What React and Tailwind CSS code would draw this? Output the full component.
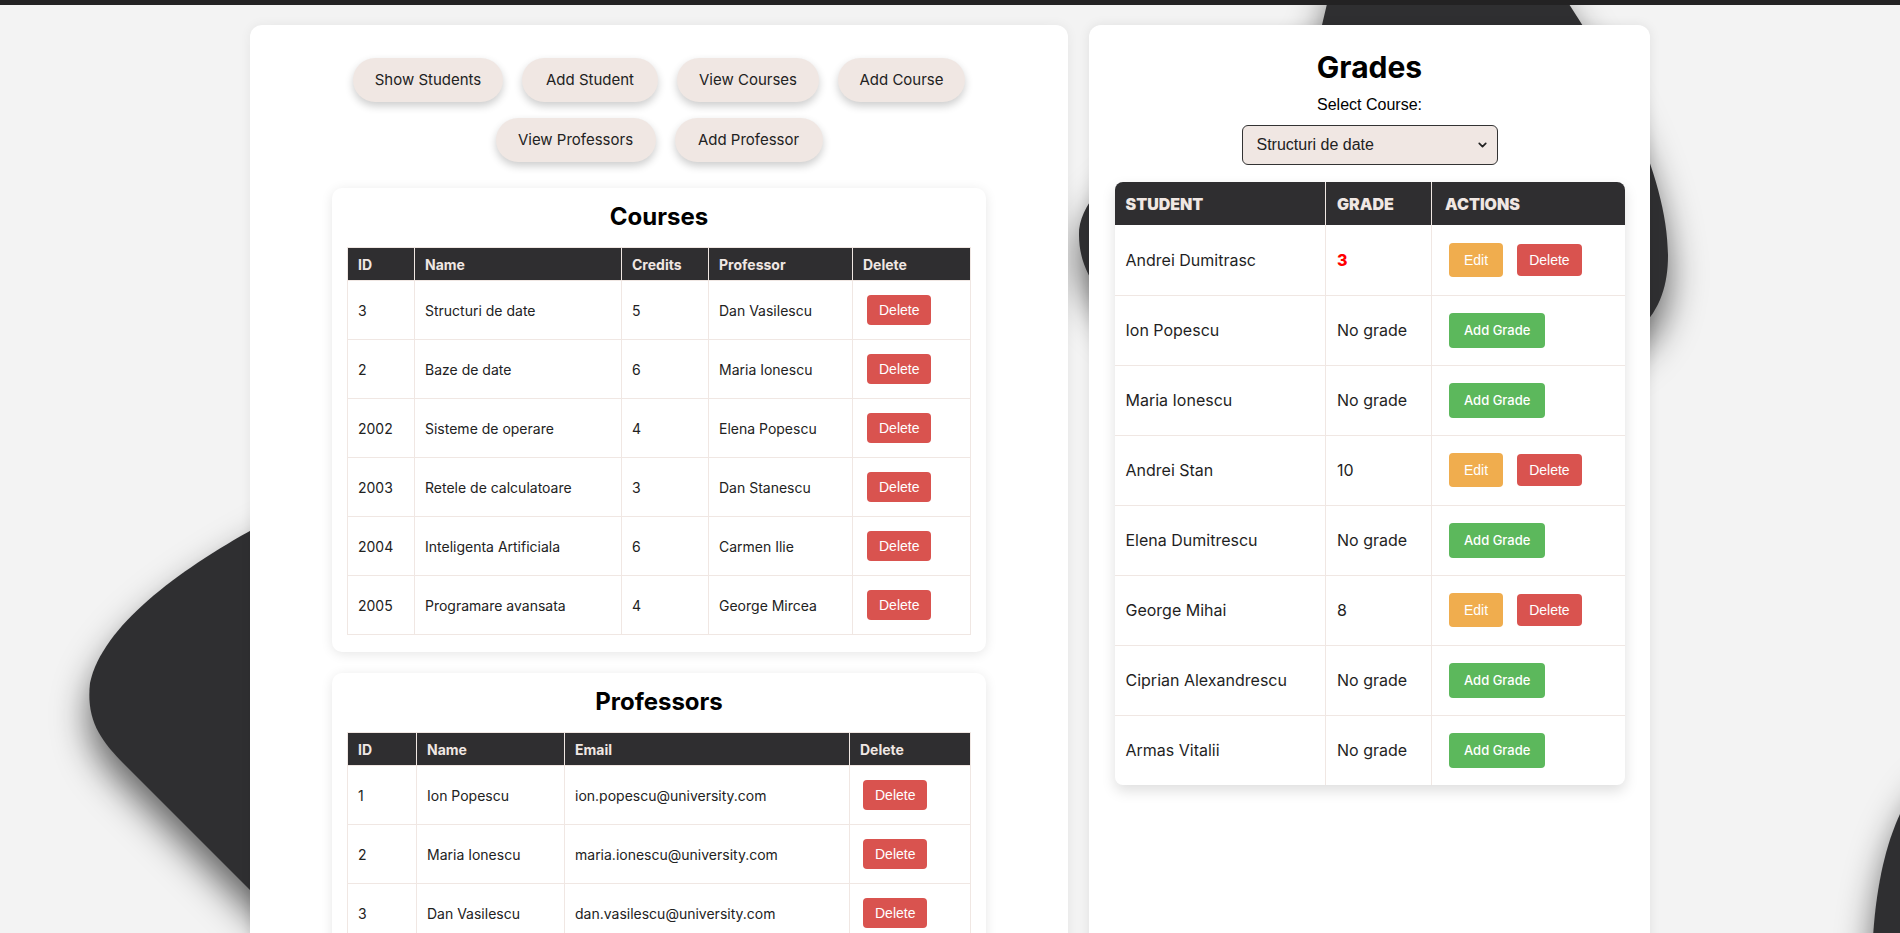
import React from "react";
import { ChevronDown } from "lucide-react";

const courses = [
  ["3", "Structuri de date", "5", "Dan Vasilescu"],
  ["2", "Baze de date", "6", "Maria Ionescu"],
  ["2002", "Sisteme de operare", "4", "Elena Popescu"],
  ["2003", "Retele de calculatoare", "3", "Dan Stanescu"],
  ["2004", "Inteligenta Artificiala", "6", "Carmen Ilie"],
  ["2005", "Programare avansata", "4", "George Mircea"],
];

const professors = [
  ["1", "Ion Popescu", "ion.popescu@university.com"],
  ["2", "Maria Ionescu", "maria.ionescu@university.com"],
  ["3", "Dan Vasilescu", "dan.vasilescu@university.com"],
];

const grades = [
  ["Andrei Dumitrasc", "3"],
  ["Ion Popescu", null],
  ["Maria Ionescu", null],
  ["Andrei Stan", "10"],
  ["Elena Dumitrescu", null],
  ["George Mihai", "8"],
  ["Ciprian Alexandrescu", null],
  ["Armas Vitalii", null],
];

const navButtons = [
  [
    ["Show Students", "w-[150px]"],
    ["Add Student", "w-[136px]"],
    ["View Courses", "w-[142px]"],
    ["Add Course", "w-[127px]"],
  ],
  [
    ["View Professors", "w-[160px]"],
    ["Add Professor", "w-[148px]"],
  ],
];

const blobPaths = [
  "M 1335 -30 L 1545 -30 C 1590 30, 1668 160, 1668 255 C 1668 330, 1620 380, 1400 380 C 1200 380, 1079 320, 1079 235 C 1079 160, 1260 90, 1322 25 Z",
  "M 400 460 C 300 500, 110 590, 90 683 C 86 720, 100 740, 125 765 L 420 1060 L 1000 1060 L 1000 460 Z",
  "M 1960 750 C 1910 770, 1875 840, 1872 960 L 1960 960 Z",
];

function Blobs() {
  return (
    <svg
      className="pointer-events-none absolute left-0 top-0 h-[933px] w-[1900px]"
      viewBox="0 0 1900 933"
    >
      <defs>
        <filter id="blobBlur" filterUnits="userSpaceOnUse" x="-300" y="-300" width="2600" height="1600">
          <feGaussianBlur stdDeviation="18" />
        </filter>
      </defs>
      <g filter="url(#blobBlur)" fill="#000000" fillOpacity="0.6" transform="translate(0 20)">
        {blobPaths.map((d, i) => (
          <path key={i} d={d} />
        ))}
      </g>
      <g fill="#2f2f31">
        {blobPaths.map((d, i) => (
          <path key={i} d={d} />
        ))}
      </g>
    </svg>
  );
}

function DeleteBtn({ className = "" }) {
  return (
    <button
      className={`h-[30px] rounded-[4px] bg-[#d9534f] px-[12px] font-['Liberation_Sans',Arial,sans-serif] text-[14px] leading-none text-white ${className}`}
    >
      Delete
    </button>
  );
}

function Card({ title, children }) {
  return (
    <div className="w-[654px] rounded-[10px] bg-white px-[15px] pb-[17px] pt-[14px] shadow-[0_2px_12px_rgba(0,0,0,0.1)]">
      <h2 className="mb-[15px] text-center text-[24px] font-bold leading-[30px] text-black">{title}</h2>
      {children}
    </div>
  );
}

const thL = "h-[33px] border border-[#f0e7e3] bg-[#2f2e30] px-[10px] text-left text-[14px] font-bold text-[#f0e7e3]";
const tdL = "h-[59px] border border-[#f0e7e3] px-[10px] text-[14px] text-[#222]";
const thG = "h-[43px] bg-[#2f2e30] pl-[11px] text-left text-[16px] font-black uppercase text-[#f0e7e3]";

export default function App() {
  return (
    <div className="relative min-h-screen overflow-hidden bg-[#f3f3f3] font-['Inter',sans-serif] text-[#222]">
      <Blobs />
      <div className="relative h-[5px] bg-[#232223]" />
      <div className="relative flex items-stretch justify-center gap-[21px] pt-[20px]">
        {/* Left panel */}
        <div className="flex w-[818px] flex-col items-center rounded-[12px] bg-white pb-[30px] pt-[33px] shadow-[0_0_12px_rgba(0,0,0,0.06)]">
          <div className="flex flex-col items-center gap-[16px]">
            {navButtons.map((row, i) => (
              <div key={i} className="flex gap-[19px]">
                {row.map(([label, w]) => (
                  <button
                    key={label}
                    className={`${w} h-[44px] rounded-full bg-[#f0e7e3] text-[15px] text-[#222] shadow-[0_4px_8px_rgba(0,0,0,0.2)]`}
                  >
                    {label}
                  </button>
                ))}
              </div>
            ))}
          </div>

          <div className="mt-[26px] flex flex-col gap-[21px]">
            <Card title="Courses">
              <table className="w-full table-fixed border-collapse">
                <colgroup>
                  <col className="w-[67px]" />
                  <col className="w-[207px]" />
                  <col className="w-[87px]" />
                  <col className="w-[144px]" />
                  <col className="w-[118px]" />
                </colgroup>
                <thead>
                  <tr>
                    <th className={thL}>ID</th>
                    <th className={thL}>Name</th>
                    <th className={thL}>Credits</th>
                    <th className={thL}>Professor</th>
                    <th className={thL}>Delete</th>
                  </tr>
                </thead>
                <tbody>
                  {courses.map((c) => (
                    <tr key={c[0]}>
                      <td className={tdL}>{c[0]}</td>
                      <td className={tdL}>{c[1]}</td>
                      <td className={tdL}>{c[2]}</td>
                      <td className={tdL}>{c[3]}</td>
                      <td className={tdL}>
                        <DeleteBtn className="ml-[4px]" />
                      </td>
                    </tr>
                  ))}
                </tbody>
              </table>
            </Card>

            <Card title="Professors">
              <table className="w-full table-fixed border-collapse">
                <colgroup>
                  <col className="w-[69px]" />
                  <col className="w-[148px]" />
                  <col className="w-[285px]" />
                  <col className="w-[121px]" />
                </colgroup>
                <thead>
                  <tr>
                    <th className={thL}>ID</th>
                    <th className={thL}>Name</th>
                    <th className={thL}>Email</th>
                    <th className={thL}>Delete</th>
                  </tr>
                </thead>
                <tbody>
                  {professors.map((p) => (
                    <tr key={p[0]}>
                      <td className={tdL}>{p[0]}</td>
                      <td className={tdL}>{p[1]}</td>
                      <td className={tdL}>{p[2]}</td>
                      <td className={tdL}>
                        <DeleteBtn className="ml-[3px]" />
                      </td>
                    </tr>
                  ))}
                </tbody>
              </table>
            </Card>
          </div>
        </div>

        {/* Right panel */}
        <div className="flex w-[561px] flex-col items-center rounded-[12px] bg-white px-[25px] pt-[24px] shadow-[0_0_12px_rgba(0,0,0,0.08)]">
          <h2 className="text-[30px] font-bold leading-[36px] text-black">Grades</h2>
          <label className="mt-[11px] font-['Liberation_Sans',Arial,sans-serif] text-[16px] leading-[18px] text-black">
            Select Course:
          </label>
          <div className="relative mt-[11px] w-[256px]">
            <select
              defaultValue="Structuri de date"
              className="h-[40px] w-full appearance-none rounded-[6px] border border-[#333] bg-[#f0e7e3] pl-[14px] font-['Liberation_Sans',Arial,sans-serif] text-[16px] text-[#222] outline-none"
            >
              {courses.map((c) => (
                <option key={c[0]}>{c[1]}</option>
              ))}
            </select>
            <ChevronDown
              size={13}
              strokeWidth={3.2}
              className="pointer-events-none absolute right-[9px] top-1/2 -translate-y-1/2 text-[#222]"
            />
          </div>

          <div className="mt-[17px] w-[510px] overflow-hidden rounded-[8px] bg-white shadow-[0_6px_14px_rgba(0,0,0,0.13)]">
            <table className="w-full table-fixed border-collapse">
              <colgroup>
                <col className="w-[211px]" />
                <col className="w-[106px]" />
                <col className="w-[193px]" />
              </colgroup>
              <thead>
                <tr>
                  <th className={`${thG} border-r border-[#f0e7e3]`}>Student</th>
                  <th className={`${thG} border-r border-[#f0e7e3]`}>Grade</th>
                  <th className={`${thG} pl-[13px]`}>Actions</th>
                </tr>
              </thead>
              <tbody>
                {grades.map(([name, g], i) => {
                  const last = i === grades.length - 1;
                  const rb = last ? "" : "border-b";
                  return (
                    <tr key={name}>
                      <td className={`h-[70px] ${rb} border-r border-[#f0e7e3] pl-[11px] text-[16px] text-[#1f1f1f]`}>
                        {name}
                      </td>
                      <td
                        className={`h-[70px] ${rb} border-r border-[#f0e7e3] pl-[11px] text-[16px] ${
                          g === "3" ? "font-extrabold text-[#ff0000]" : "text-[#1f1f1f]"
                        }`}
                      >
                        {g ?? "No grade"}
                      </td>
                      <td className={`h-[70px] ${rb} border-[#f0e7e3] pl-[17px]`}>
                        {g ? (
                          <div className="flex items-center gap-[14px]">
                            <button className="h-[34px] rounded-[4px] bg-[#f0ad4e] px-[15px] font-['Liberation_Sans',Arial,sans-serif] text-[14px] leading-none text-white">
                              Edit
                            </button>
                            <button className="h-[32px] rounded-[4px] bg-[#d9534f] px-[12px] font-['Liberation_Sans',Arial,sans-serif] text-[14px] leading-none text-white">
                              Delete
                            </button>
                          </div>
                        ) : (
                          <button className="h-[35px] rounded-[4px] bg-[#5cb85c] px-[15px] text-[13px] font-medium leading-none text-white">
                            Add Grade
                          </button>
                        )}
                      </td>
                    </tr>
                  );
                })}
              </tbody>
            </table>
          </div>
        </div>
      </div>
    </div>
  );
}
